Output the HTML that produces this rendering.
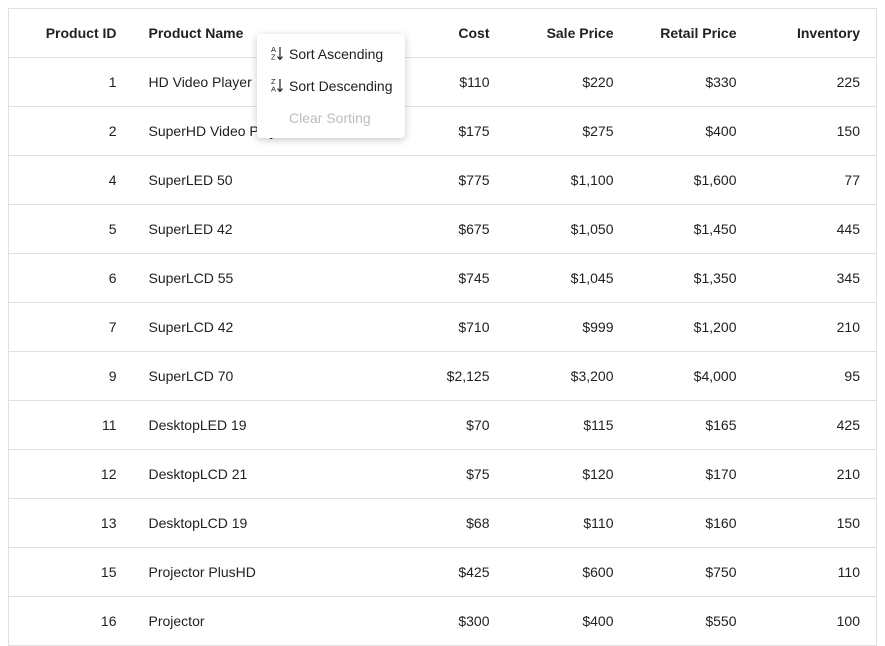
<!DOCTYPE html>
<html><head><style>
body{margin:0;background:#fff;font-family:"Liberation Sans",sans-serif;font-size:14px;color:#212121;}
table{position:absolute;left:8px;top:8px;border-collapse:collapse;width:869px;border:1px solid #e0e0e0;table-layout:fixed;}
td,th{height:49px;padding:0 16px;border-bottom:1px solid #e0e0e0;text-align:right;box-sizing:border-box;}
th{font-weight:bold;}
.l{text-align:left;}
.menu{position:absolute;left:257px;top:34px;width:148px;height:104px;background:#fff;border-radius:4px;box-shadow:0 2px 8px rgba(0,0,0,.22);}
.it{position:absolute;left:32px;font-size:14px;white-space:nowrap;}
svg{position:absolute;left:13px;}
</style></head><body>
<table>
<colgroup><col style="width:124px"><col style="width:249px"><col style="width:124px"><col style="width:124px"><col style="width:123px"><col style="width:124px"></colgroup>
<tr><th>Product ID</th><th class="l">Product Name</th><th>Cost</th><th>Sale Price</th><th>Retail Price</th><th>Inventory</th></tr>
<tr><td>1</td><td class="l">HD Video Player</td><td>$110</td><td>$220</td><td>$330</td><td>225</td></tr>
<tr><td>2</td><td class="l">SuperHD Video Player</td><td>$175</td><td>$275</td><td>$400</td><td>150</td></tr>
<tr><td>4</td><td class="l">SuperLED 50</td><td>$775</td><td>$1,100</td><td>$1,600</td><td>77</td></tr>
<tr><td>5</td><td class="l">SuperLED 42</td><td>$675</td><td>$1,050</td><td>$1,450</td><td>445</td></tr>
<tr><td>6</td><td class="l">SuperLCD 55</td><td>$745</td><td>$1,045</td><td>$1,350</td><td>345</td></tr>
<tr><td>7</td><td class="l">SuperLCD 42</td><td>$710</td><td>$999</td><td>$1,200</td><td>210</td></tr>
<tr><td>9</td><td class="l">SuperLCD 70</td><td>$2,125</td><td>$3,200</td><td>$4,000</td><td>95</td></tr>
<tr><td>11</td><td class="l">DesktopLED 19</td><td>$70</td><td>$115</td><td>$165</td><td>425</td></tr>
<tr><td>12</td><td class="l">DesktopLCD 21</td><td>$75</td><td>$120</td><td>$170</td><td>210</td></tr>
<tr><td>13</td><td class="l">DesktopLCD 19</td><td>$68</td><td>$110</td><td>$160</td><td>150</td></tr>
<tr><td>15</td><td class="l">Projector PlusHD</td><td>$425</td><td>$600</td><td>$750</td><td>110</td></tr>
<tr><td>16</td><td class="l">Projector</td><td>$300</td><td>$400</td><td>$550</td><td>100</td></tr>
</table>
<div class="menu">
<svg style="top:11px" width="16" height="17" viewBox="0 0 16 17"><text x="1" y="7" font-size="7.5" fill="#212121" font-family="Liberation Sans">A</text><text x="1" y="14.5" font-size="7.5" fill="#212121" font-family="Liberation Sans">Z</text><path d="M10 2v12M7.5 11.5L10 14.5L12.5 11.5" stroke="#212121" stroke-width="1.2" fill="none"/></svg>
<div class="it" style="top:12px">Sort Ascending</div>
<svg style="top:43px" width="16" height="17" viewBox="0 0 16 17"><text x="1" y="7" font-size="7.5" fill="#212121" font-family="Liberation Sans">Z</text><text x="1" y="14.5" font-size="7.5" fill="#212121" font-family="Liberation Sans">A</text><path d="M10 2v12M7.5 11.5L10 14.5L12.5 11.5" stroke="#212121" stroke-width="1.2" fill="none"/></svg>
<div class="it" style="top:44px">Sort Descending</div>
<div class="it" style="top:76px;color:#bdbdbd">Clear Sorting</div>
</div>
</body></html>
